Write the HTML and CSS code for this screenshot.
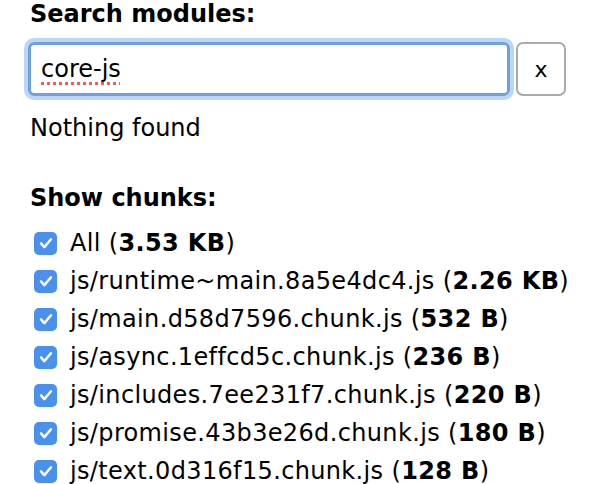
FILE: index.html
```html
<!DOCTYPE html>
<html>
<head>
<meta charset="utf-8">
<link rel="stylesheet" href="styles.css">
</head>
<body>
<div class="sidebar">
  <div class="label">Search modules:</div>
  <div class="search-row">
    <div class="input"><span class="typed">core-js</span></div>
    <button class="clear">x</button>
  </div>
  <div class="status">Nothing found</div>
  <div class="label chunks-label">Show chunks:</div>
  <ul class="chunks">
    <li><span class="cb"><svg viewBox="0 0 24 24" width="20" height="20"><path d="M6 12.5l4 4.5L18 7.5" fill="none" stroke="#fff" stroke-width="3" stroke-linecap="round" stroke-linejoin="round"/></svg></span>All (<b>3.53 KB</b>)</li>
    <li><span class="cb"><svg viewBox="0 0 24 24" width="20" height="20"><path d="M6 12.5l4 4.5L18 7.5" fill="none" stroke="#fff" stroke-width="3" stroke-linecap="round" stroke-linejoin="round"/></svg></span>js/runtime~main.8a5e4dc4.js (<b>2.26 KB</b>)</li>
    <li><span class="cb"><svg viewBox="0 0 24 24" width="20" height="20"><path d="M6 12.5l4 4.5L18 7.5" fill="none" stroke="#fff" stroke-width="3" stroke-linecap="round" stroke-linejoin="round"/></svg></span>js/main.d58d7596.chunk.js (<b>532 B</b>)</li>
    <li><span class="cb"><svg viewBox="0 0 24 24" width="20" height="20"><path d="M6 12.5l4 4.5L18 7.5" fill="none" stroke="#fff" stroke-width="3" stroke-linecap="round" stroke-linejoin="round"/></svg></span>js/async.1effcd5c.chunk.js (<b>236 B</b>)</li>
    <li><span class="cb"><svg viewBox="0 0 24 24" width="20" height="20"><path d="M6 12.5l4 4.5L18 7.5" fill="none" stroke="#fff" stroke-width="3" stroke-linecap="round" stroke-linejoin="round"/></svg></span>js/includes.7ee231f7.chunk.js (<b>220 B</b>)</li>
    <li><span class="cb"><svg viewBox="0 0 24 24" width="20" height="20"><path d="M6 12.5l4 4.5L18 7.5" fill="none" stroke="#fff" stroke-width="3" stroke-linecap="round" stroke-linejoin="round"/></svg></span>js/promise.43b3e26d.chunk.js (<b>180 B</b>)</li>
    <li><span class="cb"><svg viewBox="0 0 24 24" width="20" height="20"><path d="M6 12.5l4 4.5L18 7.5" fill="none" stroke="#fff" stroke-width="3" stroke-linecap="round" stroke-linejoin="round"/></svg></span>js/text.0d316f15.chunk.js (<b>128 B</b>)</li>
  </ul>
</div>
</body>
</html>
```
FILE: styles.css
```css
html, body {
  margin: 0;
  padding: 0;
  background: #fff;
}
body {
  font-family: "DejaVu Sans", Verdana, sans-serif;
  font-size: 24px;
  color: #000;
}
.sidebar {
  padding: 0 0 0 30px;
}
.label {
  font-weight: bold;
  line-height: 28px;
}
.search-row {
  display: flex;
  align-items: center;
  gap: 6px;
  margin-top: 14px;
}
.input {
  box-sizing: border-box;
  width: 482px;
  height: 54px;
  margin-left: -2px;
  border: 3px solid #6fa0e0;
  border-radius: 6px;
  box-shadow: 0 0 0 4px #bcd6f8;
  display: flex;
  align-items: center;
  padding-left: 10px;
  line-height: 28px;
}
.typed {
  text-decoration: underline dotted #ef5a5a;
  text-decoration-thickness: 3px;
  text-underline-offset: 5px;
}
.clear {
  box-sizing: border-box;
  width: 50px;
  height: 54px;
  background: #fff;
  border: 2px solid #aaa;
  border-radius: 7px;
  font-family: "DejaVu Sans", sans-serif;
  font-size: 22px;
  color: #000;
  padding: 0;
}
.status {
  margin-top: 18px;
  line-height: 28px;
}
.chunks-label {
  margin-top: 42px;
}
.chunks {
  list-style: none;
  margin: 12px 0 0;
  padding: 0;
}
.chunks li {
  display: flex;
  align-items: center;
  height: 38px;
  line-height: 28px;
  white-space: nowrap;
  letter-spacing: 0.35px;
}
.chunks b {
  font-weight: bold;
}
.cb {
  box-sizing: border-box;
  width: 23px;
  height: 23px;
  background: #4a90ef;
  border-radius: 5px;
  margin: 0 13px 0 4px;
  display: flex;
  align-items: center;
  justify-content: center;
  flex: none;
}
```
